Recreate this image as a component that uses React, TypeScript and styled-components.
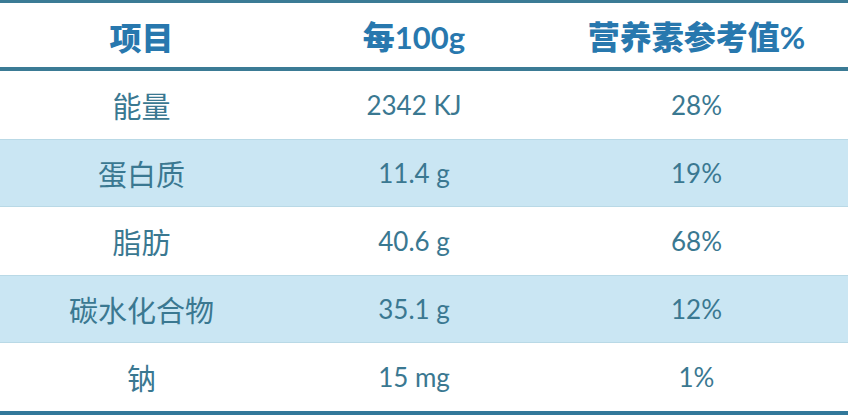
import styled, { createGlobalStyle } from 'styled-components';

const Global = createGlobalStyle`
  body {
    margin: 0;
    background: #ffffff;
  }
`;

const Table = styled.div`
  width: 848px;
  border-top: 3px solid #3b7b95;
  border-bottom: 4px solid #32789a;
  font-family: Lato, 'Noto Sans CJK SC', sans-serif;
`;

const Row = styled.div<{ $shade?: boolean; $head?: boolean }>`
  display: grid;
  grid-template-columns: 283px 262px 1fr;
  align-items: center;
  height: ${(p) => (p.$head ? '64px' : '68px')};
  background: ${(p) => (p.$shade ? '#cae6f3' : '#ffffff')};
  border-bottom: ${(p) => (p.$head ? '4px solid #3b7b95' : 'none')};
  box-shadow: ${(p) => (p.$shade ? 'inset 0 1px 0 #b9d9e6, inset 0 -1px 0 #b9d9e6' : 'none')};
`;

const HeadCell = styled.div`
  text-align: center;
  color: #2878ae;
  font-family: 'Noto Sans CJK SC', sans-serif;
  font-weight: 900;
  font-size: 32px;
  line-height: 1;
  padding-top: 2px;
`;

const HeadNum = styled.span`
  font-family: Lato, sans-serif;
  font-weight: 700;
  font-size: 31px;
`;

const Cell = styled.div<{ $cjk?: boolean }>`
  text-align: center;
  color: #3a7891;
  font-family: ${(p) => (p.$cjk ? "'Noto Sans CJK SC', sans-serif" : 'Lato, sans-serif')};
  font-size: ${(p) => (p.$cjk ? '29px' : '26px')};
  line-height: 1;
`;

const rows = [
  ['能量', '2342 KJ', '28%'],
  ['蛋白质', '11.4 g', '19%'],
  ['脂肪', '40.6 g', '68%'],
  ['碳水化合物', '35.1 g', '12%'],
  ['钠', '15 mg', '1%'],
];

export default function App() {
  return (
    <>
      <Global />
      <Table>
        <Row $head>
          <HeadCell>项目</HeadCell>
          <HeadCell>
            每<HeadNum>100g</HeadNum>
          </HeadCell>
          <HeadCell>
            营养素参考值<HeadNum>%</HeadNum>
          </HeadCell>
        </Row>
        {rows.map((r, i) => (
          <Row key={r[0]} $shade={i % 2 === 1}>
            <Cell $cjk>{r[0]}</Cell>
            <Cell>{r[1]}</Cell>
            <Cell>{r[2]}</Cell>
          </Row>
        ))}
      </Table>
    </>
  );
}
